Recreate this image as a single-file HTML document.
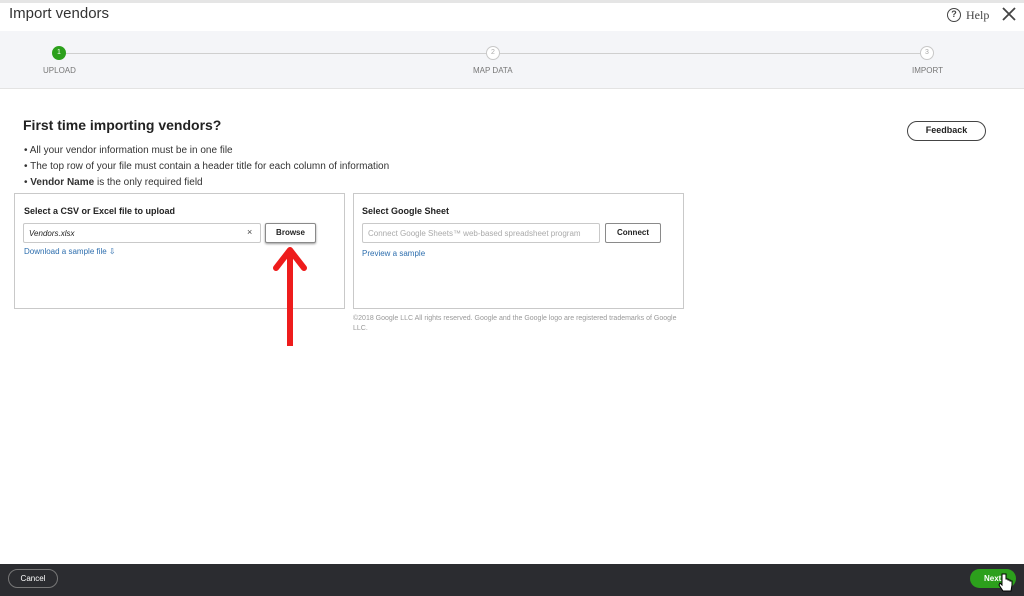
<!DOCTYPE html>
<html><head><style>
*{box-sizing:border-box;margin:0;padding:0}
body{width:1024px;height:596px;position:relative;background:#fff;font-family:"Liberation Sans",sans-serif;color:#222;overflow:hidden}
.abs{position:absolute}
.topline{left:0;top:0;width:1024px;height:3px;background:#e5e5e5}
.stepbar{left:0;top:31px;width:1024px;height:58px;background:#f4f5f8;border-bottom:1px solid #e3e3e3}
.circ{width:14px;height:14px;border-radius:50%;border:1px solid #c8c8c8;background:#fff;font-size:7px;color:#aaa;text-align:center;line-height:12px}
.lbl{font-size:8px;color:#777}
.box{border:1px solid #c9c9c9;background:#fff}
.btn{border:1px solid #8a8a8a;border-radius:2px;background:#fff;font-size:8px;font-weight:bold;text-align:center}
.link{color:#2d6eae;font-size:8px}
</style></head><body>
<div class="abs topline"></div>
<div class="abs" style="left:9px;top:5px;font-size:15px;color:#333">Import vendors</div>
<div class="abs" style="left:947px;top:8px;width:14px;height:14px;border:1.5px solid #444;border-radius:50%;font-size:9px;text-align:center;line-height:11px;font-weight:bold;color:#444">?</div>
<div class="abs" style="left:966px;top:8px;font-size:12px;font-family:'Liberation Serif',serif;color:#444">Help</div>
<svg class="abs" style="left:1001px;top:6px" width="16" height="16"><path d="M2 2L14 14M14 2L2 14" stroke="#444" stroke-width="1.8"/></svg>
<div class="abs stepbar"></div>
<div class="abs" style="left:60px;top:53px;width:868px;height:1px;background:#cfcfcf"></div>
<div class="abs circ" style="left:52px;top:46px;background:#2ca01c;border-color:#2ca01c;color:#fff">1</div>
<div class="abs circ" style="left:486px;top:46px">2</div>
<div class="abs circ" style="left:920px;top:46px">3</div>
<div class="abs lbl" style="left:43px;top:66px">UPLOAD</div>
<div class="abs lbl" style="left:473px;top:66px">MAP DATA</div>
<div class="abs lbl" style="left:912px;top:66px">IMPORT</div>
<div class="abs" style="left:23px;top:117px;font-size:14px;font-weight:bold">First time importing vendors?</div>
<div class="abs" style="left:24px;top:143px;font-size:10px;line-height:16px;color:#333">
• All your vendor information must be in one file<br>• The top row of your file must contain a header title for each column of information<br>• <b>Vendor Name</b> is the only required field</div>
<div class="abs" style="left:907px;top:121px;width:79px;height:20px;border:1.5px solid #444;border-radius:10px;font-size:9px;font-weight:bold;text-align:center;line-height:17px">Feedback</div>
<div class="abs box" style="left:14px;top:193px;width:331px;height:116px"></div>
<div class="abs" style="left:24px;top:206px;font-size:9px;font-weight:bold">Select a CSV or Excel file to upload</div>
<div class="abs box" style="left:23px;top:223px;width:238px;height:20px;border-radius:2px"></div>
<div class="abs" style="left:29px;top:229px;font-size:8px;font-style:italic">Vendors.xlsx</div>
<div class="abs" style="left:247px;top:227px;font-size:9px;color:#444">×</div>
<div class="abs btn" style="left:265px;top:223px;width:51px;height:20px;line-height:18px;box-shadow:0 1px 2px #999">Browse</div>
<div class="abs link" style="left:24px;top:247px">Download a sample file ⇩</div>
<div class="abs box" style="left:353px;top:193px;width:331px;height:116px"></div>
<div class="abs" style="left:362px;top:206px;font-size:9px;font-weight:bold">Select Google Sheet</div>
<div class="abs box" style="left:362px;top:223px;width:238px;height:20px;border-radius:2px;font-size:8px;color:#aaa;padding:5px 5px">Connect Google Sheets™ web-based spreadsheet program</div>
<div class="abs btn" style="left:605px;top:223px;width:56px;height:20px;line-height:18px">Connect</div>
<div class="abs link" style="left:362px;top:249px">Preview a sample</div>
<div class="abs" style="left:353px;top:314px;width:334px;font-size:7px;color:#999;line-height:10px">©2018 Google LLC All rights reserved. Google and the Google logo are registered trademarks of Google LLC.</div>
<svg class="abs" style="left:270px;top:242px" width="40" height="106"><rect x="17" y="12" width="6" height="92" fill="#ee1c1c"/><path d="M6 26L20 8L34 26" stroke="#ee1c1c" stroke-width="6" fill="none" stroke-linecap="round" stroke-linejoin="round"/></svg>
<div class="abs" style="left:0;top:564px;width:1024px;height:32px;background:#2b2c30"></div>
<div class="abs" style="left:8px;top:569px;width:50px;height:19px;border:1px solid #777;border-radius:10px;color:#fff;font-size:8px;text-align:center;line-height:17px">Cancel</div>
<div class="abs" style="left:970px;top:569px;width:46px;height:19px;background:#2ca01c;border-radius:10px;color:#fff;font-size:8px;font-weight:bold;line-height:19px;padding-left:14px">Next</div>
<svg class="abs" style="left:998px;top:572px" width="16" height="22"><path d="M4 2v11l-2-2-1 2 4 6h8l1-6v-4h-2v-1h-2v-1h-2V2z" fill="#fff" stroke="#000" stroke-width="1"/></svg>
</body></html>
